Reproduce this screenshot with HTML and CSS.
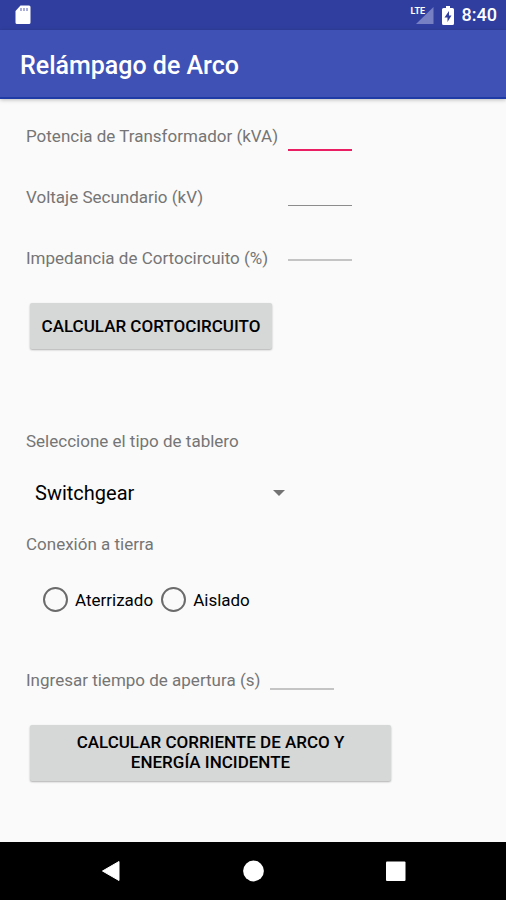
FILE: index.html
```html
<!DOCTYPE html>
<html lang="es">
<head>
  <meta charset="UTF-8">
  <meta name="viewport" content="width=device-width, initial-scale=1">
  <title>Relámpago de Arco</title>
  <link rel="stylesheet" href="styles.css">
</head>
<body>
  <div class="status-bar">
    <svg class="sd-icon" width="16" height="20" viewBox="0 0 16 20">
      <path d="M5.500 0.500H14a1.500 1.500 0 0 1 1.500 1.500v15.500a1.500 1.500 0 0 1-1.500 1.500H2a1.500 1.500 0 0 1-1.500-1.500V6z" fill="#fff"/>
      <path d="M6 3v3M9 3v3M12 3v3" stroke="#8d95cc" stroke-width="1.500"/>
    </svg>
    <div class="status-right">
      <div class="signal">
        <svg width="18" height="17" viewBox="0 0 18 17">
          <path d="M17.500 0v17H0z" fill="#7680c3"/>
        </svg>
        <span class="lte">LTE</span>
      </div>
      <svg width="12" height="19" viewBox="0 0 12 19">
        <path d="M4 0h4v2h2.500a1.500 1.500 0 0 1 1.500 1.500v14a1.500 1.500 0 0 1-1.500 1.500h-9A1.500 1.500 0 0 1 0 17.500v-14A1.500 1.500 0 0 1 1.500 2H4z" fill="#fff"/>
        <path d="M7 5L2.500 11.500H5.500V16L9.500 9.500H7z" fill="#303f9f"/>
      </svg>
      <span class="clock">8:40</span>
    </div>
  </div>

  <header class="app-bar">
    <h1>Relámpago de Arco</h1>
  </header>

  <main class="content">
    <div class="transformer">
      <div class="labels">
        <label for="potencia">Potencia de Transformador (kVA)</label>
        <label for="voltaje">Voltaje Secundario (kV)</label>
        <label for="impedancia">Impedancia de Cortocircuito (%)</label>
      </div>
      <div class="fields">
        <input type="text" id="potencia" class="field active">
        <input type="text" id="voltaje" class="field">
        <input type="text" id="impedancia" class="field light">
      </div>
    </div>

    <button type="button" class="btn">CALCULAR CORTOCIRCUITO</button>

    <label for="tablero" class="tablero-label">Seleccione el tipo de tablero</label>
    <div class="spinner">
      <select id="tablero">
        <option>Switchgear</option>
      </select>
      <svg class="arrow" width="12" height="6" viewBox="0 0 12 6">
        <path d="M0 0h12L6 6z" fill="#737373"/>
      </svg>
    </div>

    <fieldset class="conexion">
      <legend>Conexión a tierra</legend>
      <div class="radios">
        <label class="radio"><input type="radio" name="conexion">Aterrizado</label>
        <label class="radio"><input type="radio" name="conexion">Aislado</label>
      </div>
    </fieldset>

    <div class="tiempo">
      <label for="tiempo">Ingresar tiempo de apertura (s)</label>
      <input type="text" id="tiempo" class="field light">
    </div>

    <button type="button" class="btn btn-wide">CALCULAR CORRIENTE DE ARCO Y ENERGÍA INCIDENTE</button>
  </main>

  <nav class="nav-bar">
    <button type="button" aria-label="Atrás">
      <svg width="22" height="22" viewBox="0 0 22 22"><path d="M19 1.500v19L2.500 11z" fill="#fff" stroke="#fff" stroke-linejoin="round"/></svg>
    </button>
    <button type="button" aria-label="Inicio">
      <svg width="22" height="22" viewBox="0 0 22 22"><circle cx="11.500" cy="11" r="10.400" fill="#fff"/></svg>
    </button>
    <button type="button" aria-label="Recientes">
      <svg width="22" height="22" viewBox="0 0 22 22"><rect x="2" y="1.500" width="19.500" height="19.500" rx="1" fill="#fff"/></svg>
    </button>
  </nav>
</body>
</html>
```

FILE: styles.css
```css
* {
  box-sizing: border-box;
}
body {
  margin: 0;
  min-height: 100vh;
  display: flex;
  flex-direction: column;
  font-family: Roboto, "Liberation Sans", sans-serif;
  font-size: 17px;
  line-height: 20px;
  color: #757575;
  background: #fafafa;
}

/* Barra de estado */
.status-bar {
  display: flex;
  justify-content: space-between;
  align-items: center;
  height: 30px;
  padding: 0 9px 0 15px;
  background: #303f9f;
  color: #fff;
}
.status-right {
  display: flex;
  align-items: center;
  gap: 8px;
}
.signal {
  position: relative;
  display: flex;
}
.lte {
  position: absolute;
  top: -2px;
  left: -5px;
  font-size: 9px;
  line-height: 12px;
  font-weight: 700;
}
.clock {
  font-size: 18px;
  font-weight: 500;
}

.app-bar {
  display: flex;
  align-items: center;
  height: 69px;
  padding: 4px 20px 0;
  background: #3f51b5;
  border-bottom: 2px solid #1f3ba6;
  box-shadow: 0 1px 4px rgba(0,0,0,0.25);
}
h1 {
  margin: 0;
  font-size: 25px;
  line-height: 32px;
  font-weight: 500;
  color: #fff;
}

/* Formulario */
.content {
  flex: 1;
  display: flex;
  flex-direction: column;
  align-items: flex-start;
  padding: 7px 26px 60px;
}
.transformer {
  display: flex;
  gap: 10px;
}
.labels {
  display: flex;
  flex-direction: column;
  gap: 41px;
  padding-top: 20px;
}
.fields {
  display: flex;
  flex-direction: column;
  gap: 10px;
}
.field {
  width: 64px;
  height: 45px;
  padding: 0;
  border: 0;
  border-bottom: 1px solid #8c8c8c;
  background: transparent;
  font: inherit;
  color: #000;
  outline: none;
}
.field.light {
  border-bottom: 2px solid #c4c4c4;
}
.field.active {
  border-bottom: 2px solid #e91e63;
}
.btn {
  min-width: 242px;
  margin: 35px 4px 0;
  padding: 13px 10px;
  border: 0;
  border-radius: 2px;
  background: #d6d7d7;
  box-shadow: 0 1px 2px rgba(0,0,0,0.3);
  font: inherit;
  font-weight: 500;
  color: #000;
  cursor: pointer;
}
.tablero-label {
  margin-top: 82px;
}
.spinner {
  position: relative;
  width: 272px;
  margin-top: 22px;
}
select {
  appearance: none;
  width: 100%;
  height: 40px;
  padding: 0 36px 0 9px;
  border: 0;
  background: transparent;
  font: inherit;
  font-size: 20px;
  line-height: 28px;
  color: #000;
}
.arrow {
  position: absolute;
  top: 17px;
  right: 13px;
  pointer-events: none;
}
.conexion {
  margin: 21px 0 0;
  padding: 0;
  border: 0;
}
legend {
  padding: 0;
}
.radios {
  display: flex;
  gap: 8px;
  padding: 33px 0 0 17px;
}
.radio {
  display: flex;
  align-items: center;
  gap: 7px;
  color: #000;
}
input[type="radio"] {
  appearance: none;
  width: 25px;
  height: 25px;
  margin: 0;
  border: 2px solid #6b6b6b;
  border-radius: 50%;
}
.tiempo {
  display: flex;
  align-items: flex-end;
  gap: 10px;
  margin-top: 33px;
}
.btn-wide {
  width: 100%;
  max-width: 361px;
  padding: 7px 40px 9px;
}

/* Barra de navegación */
.nav-bar {
  display: flex;
  justify-content: center;
  gap: 84px;
  height: 58px;
  background: #000;
}
.nav-bar button {
  display: flex;
  align-items: center;
  justify-content: center;
  width: 58px;
  padding: 0;
  border: 0;
  background: transparent;
}
```
